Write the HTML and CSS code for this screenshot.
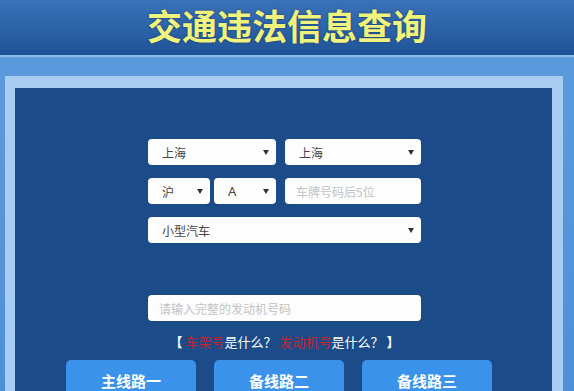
FILE: index.html
```html
<!DOCTYPE html>
<html lang="zh-CN">
<head>
<meta charset="utf-8">
<title>交通违法信息查询</title>
<link rel="stylesheet" href="styles.css">
</head>
<body>
<header class="top">
  <h1 class="title">交通违法信息查询</h1>
</header>
<div class="band">
  <div class="frame">
    <div class="panel">
      <div class="form">
        <div class="row">
          <div class="sel w128"><span>上海</span><i class="arrow"></i></div>
          <div class="sel w136"><span>上海</span><i class="arrow"></i></div>
        </div>
        <div class="row">
          <div class="sel w62"><span>沪</span><i class="arrow"></i></div>
          <div class="sel w62 latin"><span>A</span><i class="arrow"></i></div>
          <div class="inp w136"><span class="ph">车牌号码后5位</span></div>
        </div>
        <div class="row">
          <div class="sel wfull"><span>小型汽车</span><i class="arrow"></i></div>
        </div>
        <div class="row hidden-row"></div>
        <div class="row">
          <div class="inp wfull"><span class="ph">请输入完整的发动机号码</span></div>
        </div>
      </div>
      <p class="help"><b class="br">【</b> <span class="red">车架号</span>是什么？ <span class="red">发动机号</span>是什么？ <b class="br">】</b></p>
      <div class="btns">
        <div class="btn">主线路一</div>
        <div class="btn">备线路二</div>
        <div class="btn">备线路三</div>
      </div>
    </div>
  </div>
</div>
</body>
</html>
```
FILE: styles.css
```css
html, body {
  margin: 0;
  padding: 0;
  height: 391px;
  overflow: hidden;
}
body {
  background: linear-gradient(#5e9cdf, #4f8fd6);
  font-family: "Noto Sans CJK SC", "Noto Sans", sans-serif;
}
.top {
  height: 55px;
  background: linear-gradient(#3872b8, #2a60a6 60%, #1f5397);
  border-bottom: 2px solid #8dbfe4;
  text-align: center;
}
.title {
  margin: 0;
  font-size: 35px;
  line-height: 50px;
  font-weight: 700;
  color: #f1f47c;
  text-shadow: 0 0 2px rgba(10, 30, 70, 0.7);
}
.band {
  padding: 19px 11px 0 5px;
}
.frame {
  border-style: solid;
  border-color: #a9cdf2;
  border-width: 12px 11px 0 10px;
  height: 303px;
}
.panel {
  background: #1b4c89;
  height: 100%;
  padding-top: 51px;
  box-sizing: border-box;
  overflow: hidden;
}
.form {
  width: 273px;
  margin-left: 133px;
  display: flex;
  flex-direction: column;
  gap: 13px;
}
.row {
  display: flex;
  gap: 9px;
  height: 26px;
}
.row .w62 + .w62 {
  margin-left: -5px;
}
.sel, .inp {
  height: 26px;
  background: #fdfdfd;
  border-radius: 4px;
  box-sizing: border-box;
  display: flex;
  align-items: center;
  font-size: 12px;
  color: #444;
}
.sel {
  justify-content: space-between;
  padding: 0 7px 0 14px;
}
.inp {
  padding: 0 11px;
}
.latin span {
  font-family: "Noto Sans", sans-serif;
  font-size: 13px;
}
.w128 { width: 128px; }
.w136 { width: 136px; }
.w62 { width: 62px; }
.wfull { width: 273px; }
.arrow {
  width: 0;
  height: 0;
  border-left: 3px solid transparent;
  border-right: 3px solid transparent;
  border-top: 5px solid #333;
}
.ph {
  color: #c2c2c2;
}
.hidden-row {
  visibility: hidden;
}
.help {
  margin: 11px 0 0 0;
  text-align: center;
  padding-left: 2px;
  font-size: 13px;
  line-height: 20px;
  color: #ffffff;
}
.br {
  font-weight: 700;
}
.red {
  color: #c4242b;
}
.btns {
  display: flex;
  gap: 18px;
  margin: 8px 0 0 51px;
}
.btn {
  flex: none;
  width: 130px;
  height: 40px;
  border-radius: 5px;
  background: #3a92eb;
  color: #ffffff;
  font-size: 15px;
  font-weight: 700;
  display: flex;
  align-items: center;
  justify-content: center;
}
```
